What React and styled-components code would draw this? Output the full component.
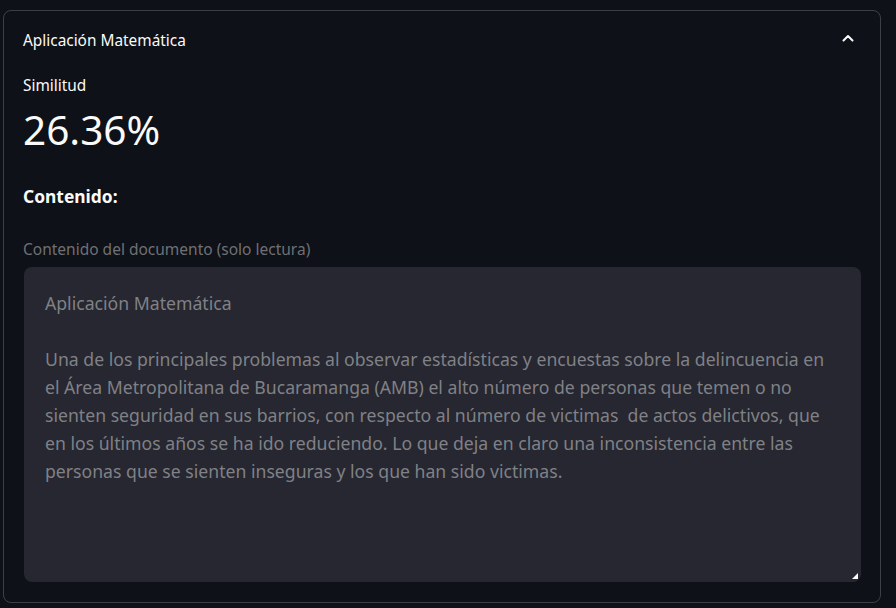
import React from "react";
import styled, { createGlobalStyle } from "styled-components";

const Global = createGlobalStyle`
  html, body { margin: 0; padding: 0; background: #0e1117; }
  body { font-family: "Noto Sans", sans-serif; color: #fafafa; }
  * { box-sizing: border-box; }
`;

const Page = styled.div`
  width: 896px;
  height: 608px;
  padding: 10px 15px 6px 3px;
  background: #0e1117;
`;

const Expander = styled.section`
  border: 1px solid rgba(250, 250, 250, 0.2);
  border-radius: 8px;
  height: 593px;
  display: flex;
  flex-direction: column;
`;

const Summary = styled.div`
  height: 58px;
  display: flex;
  align-items: center;
  justify-content: space-between;
  padding: 0 26px 0 19px;
  font-size: 15.4px;
  color: #fafafa;
`;

const Chevron = styled.svg`
  margin-top: -4px;
`;

const Body = styled.div`
  padding: 0 19px 19px 19px;
  display: flex;
  flex-direction: column;
  flex: 1;
`;

const MetricLabel = styled.div`
  margin-top: 7px;
  font-size: 15.4px;
  line-height: 20px;
  color: #fafafa;
`;

const MetricValue = styled.div`
  margin-top: 12px;
  font-size: 40.5px;
  line-height: 44px;
  color: #fafafa;
  font-weight: 400;
`;

const Heading = styled.div`
  margin-top: 32px;
  font-size: 17.4px;
  line-height: 24px;
  font-weight: 700;
  color: #fafafa;
`;

const FieldLabel = styled.label`
  margin-top: 31px;
  font-size: 15.5px;
  line-height: 20px;
  color: #6e7075;
`;

const AreaWrap = styled.div`
  position: relative;
  margin-top: 8px;
  height: 315px;
  width: 837px;
  margin-left: 1px;
  background: #262730;
  border-radius: 8px;
  overflow: hidden;
`;

const Area = styled.textarea`
  width: 100%;
  height: 100%;
  border: none;
  outline: none;
  resize: none;
  background: transparent;
  padding: 22px 16px 16px 21px;
  font-family: "Noto Sans", sans-serif;
  font-size: 17.65px;
  line-height: 28px;
  color: #808186;
  white-space: pre;
  overflow: hidden;
`;

const Grip = styled.svg`
  position: absolute;
  right: 3px;
  bottom: 3px;
`;

const content = `Aplicación Matemática

Una de los principales problemas al observar estadísticas y encuestas sobre la delincuencia en
el Área Metropolitana de Bucaramanga (AMB) el alto número de personas que temen o no
sienten seguridad en sus barrios, con respecto al número de victimas  de actos delictivos, que
en los últimos años se ha ido reduciendo. Lo que deja en claro una inconsistencia entre las
personas que se sienten inseguras y los que han sido victimas.`;

export default function App() {
  return (
    <>
      <Global />
      <Page>
        <Expander>
          <Summary>
            <span>Aplicación Matemática</span>
            <Chevron width="12" height="8" viewBox="0 0 12 8">
              <path d="M1.5 6.5 L6 2 L10.5 6.5" fill="none" stroke="#fafafa" strokeWidth="2" strokeLinecap="round" strokeLinejoin="round" />
            </Chevron>
          </Summary>
          <Body>
            <MetricLabel>Similitud</MetricLabel>
            <MetricValue>26.36%</MetricValue>
            <Heading>Contenido:</Heading>
            <FieldLabel>Contenido del documento (solo lectura)</FieldLabel>
            <AreaWrap>
              <Area readOnly value={content} />
              <Grip width="6" height="6" viewBox="0 0 6 6">
                <path d="M6 0 L6 6 L0 6 Z" fill="#fafafa" />
              </Grip>
            </AreaWrap>
          </Body>
        </Expander>
      </Page>
    </>
  );
}
